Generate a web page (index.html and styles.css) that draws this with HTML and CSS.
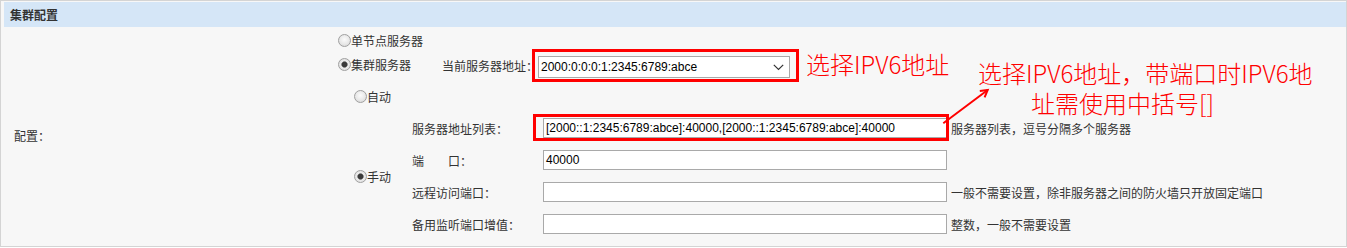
FILE: index.html
```html
<!DOCTYPE html>
<html lang="zh-CN">
<head>
<meta charset="utf-8">
<title>集群配置</title>
<link rel="stylesheet" href="styles.css">
</head>
<body>
<div class="panel">
  <div class="panel-head">集群配置</div>
  <div class="panel-body">
    <div class="cfg-label">配置：</div>
    <div class="cfg-main">
      <div class="row r1">
        <label class="radio"><span class="rb"></span>单节点服务器</label>
      </div>
      <div class="row r2">
        <label class="radio"><span class="rb on"></span>集群服务器</label>
        <span class="cur-label">当前服务器地址：</span>
        <div class="select">
          <span>2000:0:0:0:1:2345:6789:abce</span>
          <svg class="chev" width="11" height="7" viewBox="0 0 11 7"><path d="M0.8 0.8 L5.5 5.5 L10.2 0.8" fill="none" stroke="#333" stroke-width="1.2"/></svg>
        </div>
      </div>
      <div class="row r3">
        <label class="radio"><span class="rb"></span>自动</label>
      </div>
      <div class="manual">
        <div class="manual-radio">
          <label class="radio"><span class="rb on"></span>手动</label>
        </div>
        <div class="fields">
          <div class="field">
            <span class="flabel">服务器地址列表：</span>
            <div class="input">[2000::1:2345:6789:abce]:40000,[2000::1:2345:6789:abce]:40000</div>
            <span class="hint">服务器列表，逗号分隔多个服务器</span>
          </div>
          <div class="field">
            <span class="flabel">端　　口：</span>
            <div class="input">40000</div>
          </div>
          <div class="field">
            <span class="flabel">远程访问端口：</span>
            <div class="input"></div>
            <span class="hint">一般不需要设置，除非服务器之间的防火墙只开放固定端口</span>
          </div>
          <div class="field">
            <span class="flabel">备用监听端口增值：</span>
            <div class="input"></div>
            <span class="hint">整数，一般不需要设置</span>
          </div>
        </div>
      </div>
    </div>
  </div>

  <div class="mark mark1"></div>
  <div class="mark mark2"></div>
  <div class="note note1">选择IPV6地址</div>
  <div class="note note2"><span class="l1">选择IPV6地址，带端口时IPV6地</span><span class="l2">址需使用中括号[]</span></div>
  <svg class="arrow" width="80" height="50" viewBox="0 0 80 50">
    <path d="M13.3 43.3 L57.7 10" fill="none" stroke="#f00" stroke-width="2"/>
    <path d="M49.8 11 L57.7 10 L54.6 17.4" fill="none" stroke="#f00" stroke-width="2" stroke-linejoin="miter"/>
  </svg>
</div>
</body>
</html>
```

FILE: styles.css
```css
html, body {
  margin: 0;
  padding: 0;
  background: #ffffff;
}

body {
  font-family: "Liberation Sans", "Noto Sans CJK SC", sans-serif;
  font-size: 12px;
  color: #333333;
}

.panel {
  position: relative;
  width: 1347px;
  height: 247px;
  box-sizing: border-box;
  border: 1px solid #d4d4d4;
  padding: 1px 0 0 3px;
  background: #f7f7f7;
  display: flex;
  flex-direction: column;
}

.panel-head {
  height: 25px;
  line-height: 25px;
  background: #d5e6f7;
  padding-left: 6px;
  font-family: "Noto Sans CJK SC", sans-serif;
  font-weight: bold;
  font-size: 12px;
  color: #333333;
}

.panel-body {
  flex: 1;
  display: flex;
}

.cfg-label {
  width: 334px;
  box-sizing: border-box;
  padding-left: 10px;
  display: flex;
  align-items: center;
  padding-bottom: 2px;
  font-family: "Noto Sans CJK SC", sans-serif;
}

.cfg-main {
  flex: 1;
  display: flex;
  flex-direction: column;
}

.row {
  display: flex;
  align-items: center;
}

.r1 { height: 26px; }
.r2 { height: 28px; }
.r3 { height: 31px; padding-left: 16px; }

.radio {
  display: flex;
  align-items: center;
  font-family: "Noto Sans CJK SC", sans-serif;
  font-size: 12px;
  color: #333333;
  white-space: nowrap;
}

.rb {
  width: 13px;
  height: 13px;
  box-sizing: border-box;
  margin-left: 0;
  border-radius: 50%;
  border: 1px solid #a0a0a0;
  background: radial-gradient(circle at 50% 40%, #fbfbfb 0%, #e8e8e8 55%, #d0d0d0 100%);
  flex: none;
}

.rb.on {
  background: radial-gradient(circle, #3a3a3a 0, #3a3a3a 2.3px, #8a8a8a 3px, #ececec 3.6px, #d6d6d6 100%);
}

.r2 .radio {
  width: 104px;
  margin-bottom: 5px;
}

.cur-label {
  width: 96px;
  font-family: "Noto Sans CJK SC", sans-serif;
  white-space: nowrap;
  margin-bottom: 3px;
}

.select {
  width: 252px;
  height: 22px;
  box-sizing: border-box;
  border: 1px solid #a9a9a9;
  background: #ffffff;
  display: flex;
  align-items: center;
  justify-content: space-between;
  padding: 0 5px 0 2px;
  font-family: "Liberation Sans", sans-serif;
  font-size: 12px;
  color: #000000;
}

.chev { display: block; }

.manual {
  display: flex;
  height: 128px;
}

.manual-radio {
  width: 74px;
  box-sizing: border-box;
  padding-left: 16px;
  display: flex;
  align-items: center;
}

.fields {
  display: flex;
  flex-direction: column;
}

.field {
  height: 32px;
  display: flex;
  align-items: center;
}

.flabel {
  width: 131px;
  font-family: "Noto Sans CJK SC", sans-serif;
  white-space: nowrap;
}

.input {
  width: 404px;
  height: 20px;
  box-sizing: border-box;
  border: 1px solid #a9a9a9;
  background: #ffffff;
  padding: 0 2px;
  line-height: 18px;
  font-family: "Liberation Sans", sans-serif;
  font-size: 12px;
  color: #000000;
  white-space: nowrap;
  overflow: hidden;
}

.hint {
  margin-left: 4px;
  font-family: "Noto Sans CJK SC", sans-serif;
  white-space: nowrap;
}

/* annotation overlays */
.mark {
  position: absolute;
  box-sizing: border-box;
  border: 3px solid #ff0000;
}

.mark1 {
  left: 531px;
  top: 48px;
  width: 267px;
  height: 33px;
}

.mark2 {
  left: 532px;
  top: 113px;
  width: 416px;
  height: 27px;
}

.note {
  position: absolute;
  font-family: "Noto Sans CJK SC", sans-serif;
  font-weight: 300;
  font-size: 24px;
  line-height: 30px;
  color: #ff0000;
  white-space: nowrap;
}

.note1 {
  left: 805px;
  top: 48px;
}

.note2 {
  left: 977px;
  top: 57px;
  line-height: 30px;
  display: flex;
  flex-direction: column;
}

.note2 .l2 {
  padding-left: 53px;
}

.arrow {
  position: absolute;
  left: 929px;
  top: 79px;
}
```
